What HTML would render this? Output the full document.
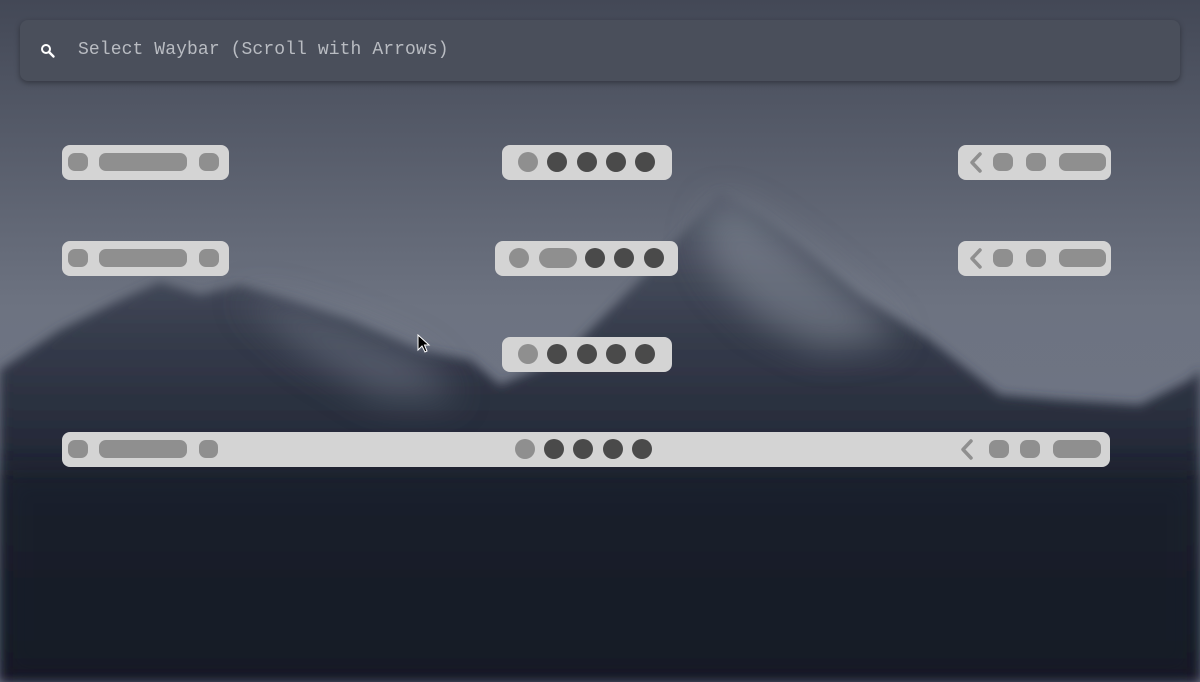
<!DOCTYPE html>
<html><head><style>
html,body{margin:0;padding:0;width:1200px;height:682px;overflow:hidden;background:#1a1e2b}
.bg{position:absolute;left:0;top:0}
.search{position:absolute;left:20px;top:20px;width:1160px;height:61px;background:#4a4f5b;border-radius:8px;box-shadow:0 2px 6px rgba(0,0,0,.35)}
.search span{position:absolute;left:58px;top:20px;font:18px "Liberation Mono",monospace;color:#b9bcc2;letter-spacing:0.1px}
.bar{position:absolute;height:35px;background:#d4d4d4;border-radius:8px}
.i{position:absolute;top:8px;height:18px;border-radius:7px;background:#8f8f8f}
.c{position:absolute;top:7px;width:20px;height:20px;border-radius:50%;background:#4a4a4a}
.g{background:#8f8f8f}
</style></head><body>
<svg class="bg" width="1200" height="682">
<defs>
<linearGradient id="sky" x1="0" y1="0" x2="0" y2="1"><stop offset="0" stop-color="#434856"/><stop offset=".45" stop-color="#6d7381"/><stop offset="1" stop-color="#70768a"/></linearGradient>
<linearGradient id="m" x1="0" y1="0" x2="0" y2="1"><stop offset="0" stop-color="#555b6a"/><stop offset=".3" stop-color="#353b4b"/><stop offset=".6" stop-color="#1e2331"/><stop offset="1" stop-color="#141826"/></linearGradient>
<filter id="b" x="-10%" y="-10%" width="120%" height="120%"><feGaussianBlur stdDeviation="5"/></filter>
<filter id="b3" x="-20%" y="-20%" width="140%" height="140%"><feGaussianBlur stdDeviation="18"/></filter>
<filter id="b2"><feGaussianBlur stdDeviation="14"/></filter>
</defs>
<rect width="1200" height="682" fill="url(#sky)"/>
<g filter="url(#b)">
<path d="M0 370 L60 330 L120 300 L160 282 L200 295 L240 285 L290 300 L350 320 L420 350 L470 360 L500 385 L560 360 L600 320 L650 270 L690 225 L720 192 L760 215 L800 245 L860 295 L930 340 L1000 395 L1060 400 L1140 405 L1190 380 L1200 370 L1200 682 L0 682Z" fill="url(#m)"/>
</g>
<g filter="url(#b3)">
<path d="M720 200 L760 220 L800 250 L860 300 L900 340 L820 350 L760 320 L720 280 L700 240Z" fill="#9096a2" opacity=".5"/>
<path d="M240 295 L290 305 L350 325 L420 355 L460 400 L380 400 L300 350Z" fill="#7a8090" opacity=".45"/>
</g>
<rect x="0" y="470" width="1200" height="212" fill="#151a28" opacity=".5" filter="url(#b2)"/>
</svg>

<div class="search">
<svg style="position:absolute;left:20px;top:23px" width="16" height="16" viewBox="0 0 16 16"><circle cx="6" cy="6" r="4" fill="none" stroke="#fff" stroke-width="2"/><path d="M9 9 L13.5 13.5" stroke="#fff" stroke-width="2.4" stroke-linecap="round"/></svg>
<span>Select Waybar (Scroll with Arrows)</span>
</div>

<div class="bar" style="left:62px;top:145px;width:167px"><div class="i" style="left:6px;width:20px"></div><div class="i" style="left:37px;width:88px"></div><div class="i" style="left:137px;width:20px"></div></div>
<div class="bar" style="left:62px;top:241px;width:167px"><div class="i" style="left:6px;width:20px"></div><div class="i" style="left:37px;width:88px"></div><div class="i" style="left:137px;width:20px"></div></div>

<div class="bar" style="left:502px;top:145px;width:170px"><div class="c g" style="left:16px"></div><div class="c" style="left:45px"></div><div class="c" style="left:75px"></div><div class="c" style="left:104px"></div><div class="c" style="left:133px"></div></div>
<div class="bar" style="left:495px;top:241px;width:183px"><div class="c g" style="left:14px"></div><div class="i" style="left:44px;width:38px;top:7px;height:20px;border-radius:10px"></div><div class="c" style="left:90px"></div><div class="c" style="left:119px"></div><div class="c" style="left:149px"></div></div>
<div class="bar" style="left:502px;top:337px;width:170px"><div class="c g" style="left:16px"></div><div class="c" style="left:45px"></div><div class="c" style="left:75px"></div><div class="c" style="left:104px"></div><div class="c" style="left:133px"></div></div>

<div class="bar" style="left:958px;top:145px;width:153px"><svg style="position:absolute;left:9px;top:6px" width="18" height="24"><path d="M13 3 L5 11.5 L13 20" fill="none" stroke="#8f8f8f" stroke-width="3.5" stroke-linecap="round" stroke-linejoin="round"/></svg><div class="i" style="left:35px;width:20px"></div><div class="i" style="left:68px;width:20px"></div><div class="i" style="left:101px;width:47px"></div></div>
<div class="bar" style="left:958px;top:241px;width:153px"><svg style="position:absolute;left:9px;top:6px" width="18" height="24"><path d="M13 3 L5 11.5 L13 20" fill="none" stroke="#8f8f8f" stroke-width="3.5" stroke-linecap="round" stroke-linejoin="round"/></svg><div class="i" style="left:35px;width:20px"></div><div class="i" style="left:68px;width:20px"></div><div class="i" style="left:101px;width:47px"></div></div>

<div class="bar" style="left:62px;top:432px;width:1048px">
<div class="i" style="left:6px;width:20px"></div><div class="i" style="left:37px;width:88px"></div><div class="i" style="left:137px;width:19px"></div>
<div class="c g" style="left:453px"></div><div class="c" style="left:482px"></div><div class="c" style="left:511px"></div><div class="c" style="left:541px"></div><div class="c" style="left:570px"></div>
<svg style="position:absolute;left:896px;top:6px" width="18" height="24"><path d="M13 3 L5 11.5 L13 20" fill="none" stroke="#8f8f8f" stroke-width="3.5" stroke-linecap="round" stroke-linejoin="round"/></svg>
<div class="i" style="left:927px;width:20px"></div><div class="i" style="left:958px;width:20px"></div><div class="i" style="left:991px;width:48px"></div>
</div>

<svg style="position:absolute;left:417px;top:334px" width="14" height="20"><path d="M1 1 L1 16 L5 12 L8 18 L10 17 L7.5 11 L12 11Z" fill="#000" stroke="#fff" stroke-width="1"/></svg>
</body></html>
